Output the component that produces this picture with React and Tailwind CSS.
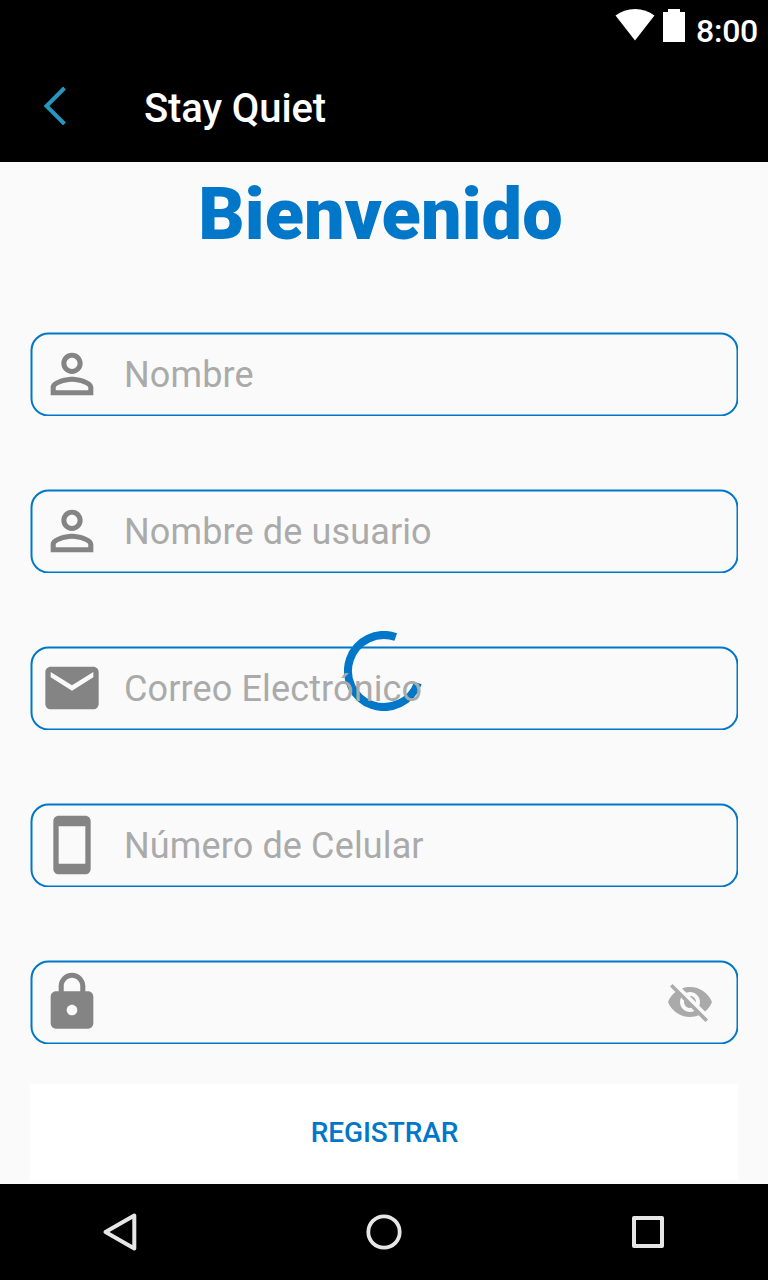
const ICONS = {
  person: "M12 5.9c1.16 0 2.1.94 2.1 2.1s-.94 2.1-2.1 2.1S9.9 9.16 9.9 8s.94-2.1 2.1-2.1m0 9c2.97 0 6.1 1.46 6.1 2.1v1.1H5.9V17c0-.64 3.13-2.1 6.1-2.1M12 4C9.79 4 8 5.79 8 8s1.79 4 4 4 4-1.79 4-4-1.79-4-4-4zm0 9c-2.67 0-8 1.34-8 4v3h16v-3c0-2.66-5.33-4-8-4z",
  mail: "M20 4H4c-1.1 0-1.99.9-1.99 2L2 18c0 1.1.9 2 2 2h16c1.1 0 2-.9 2-2V6c0-1.1-.9-2-2-2zm0 4l-8 5-8-5V6l8 5 8-5v2z",
  phone: "M17 1.01L7 1c-1.1 0-2 .9-2 2v18c0 1.1.9 2 2 2h10c1.1 0 2-.9 2-2V3c0-1.1-.9-1.99-2-1.99zM17 19H7V5h10v14z",
  lock: "M18 8h-1V6c0-2.76-2.24-5-5-5S7 3.24 7 6v2H6c-1.1 0-2 .9-2 2v10c0 1.1.9 2 2 2h12c1.1 0 2-.9 2-2V10c0-1.1-.9-2-2-2zm-6 9c-1.1 0-2-.9-2-2s.9-2 2-2 2 .9 2 2-.9 2-2 2zm3.1-9H8.9V6c0-1.71 1.39-3.1 3.1-3.1 1.71 0 3.1 1.39 3.1 3.1v2z",
  hidden: "M12 7c2.76 0 5 2.24 5 5 0 .65-.13 1.26-.36 1.83l2.92 2.92c1.51-1.26 2.7-2.89 3.43-4.75-1.73-4.39-6-7.5-11-7.5-1.4 0-2.74.25-3.98.7l2.16 2.16C10.74 7.13 11.35 7 12 7zM2 4.27l2.28 2.28.46.46C3.08 8.3 1.78 10.02 1 12c1.73 4.39 6 7.5 11 7.5 1.55 0 3.03-.3 4.38-.84l.42.42L19.73 22 21 20.73 3.27 3 2 4.27zM7.53 9.8l1.55 1.55c-.05.21-.08.43-.08.65 0 1.66 1.34 3 3 3 .22 0 .44-.03.65-.08l1.55 1.55c-.67.33-1.41.53-2.2.53-2.76 0-5-2.24-5-5 0-.79.2-1.53.53-2.2zm4.31-.78l3.15 3.15.02-.16c0-1.66-1.34-3-3-3l-.17.01z",
};

const FIELDS = [
  { icon: "person", label: "Nombre" },
  { icon: "person", label: "Nombre de usuario" },
  { icon: "mail", label: "Correo Electrónico" },
  { icon: "phone", label: "Número de Celular" },
  { icon: "lock", label: "", secret: true },
];

function Icon({ name, className }) {
  return (
    <svg viewBox="0 0 24 24" fill="currentColor" className={className}>
      <path d={ICONS[name]} />
    </svg>
  );
}

function Field({ icon, label, secret }) {
  return (
    <div className="relative flex h-[84px] items-center overflow-hidden pl-[10px] pr-6">
      <div className="absolute inset-0 translate-x-[0.5px] translate-y-[0.5px] rounded-[18px] border-2 border-[#0077c9]" />
      <Icon name={icon} className="size-16 shrink-0 text-[#848484]" />
      <span className="relative z-10 ml-5 mt-[2px] flex-1 text-[36px] leading-[42px] tracking-[0.13px] text-[#aaaaaa]">{label}</span>
      {secret && <Icon name="hidden" className="size-12 text-[#aaaaaa]" />}
    </div>
  );
}

export default function App() {
  return (
    <div className="relative flex h-[1280px] w-[768px] flex-col overflow-hidden bg-[#fafafa] font-['Roboto',sans-serif]">
      <header className="flex h-[162px] shrink-0 flex-col bg-black text-white">
        <div className="flex h-12 items-start justify-end pr-[10px]">
          <svg viewBox="0 0 40 32" className="mt-[9px] h-8 w-10" fill="#fff">
            <path d="M20 31.500L0.500 6.500C6 2.300 12.500 0 20 0s14 2.300 19.500 6.500z" />
          </svg>
          <svg viewBox="0 0 22 33" className="ml-2 mt-[9px] h-[33px] w-[22px]" fill="#fff">
            <path d="M0 3h5V0h12v3h5v30H0z" />
          </svg>
          <span className="ml-[11px] mt-3 text-[32px] font-medium leading-[38px] tracking-[-0.25px]">8:00</span>
        </div>
        <div className="flex h-[114px] items-center">
          <svg viewBox="0 0 24 40" className="ml-[43px] h-10 w-6" fill="none" stroke="#2596be" strokeWidth="4">
            <path d="M21.500 3L3.500 21L21.500 39" />
          </svg>
          <h1 className="ml-[77px] mt-[7px] text-[40px] font-medium leading-[48px] tracking-[-0.1px]">Stay Quiet</h1>
        </div>
      </header>

      <main className="flex flex-1 flex-col px-[30px]">
        <h2 className="mt-[11px] h-[84px] pr-[7px] text-center text-[72px] font-black leading-[84px] tracking-[0.1px] text-[#0077c9]">Bienvenido</h2>
        <div className="mt-[75px] flex flex-col gap-[73px]">
          {FIELDS.map((field, i) => (
            <Field key={i} {...field} />
          ))}
        </div>
        <button className="mt-10 h-24 w-full bg-white pl-px pt-[2px] text-[28px] font-medium tracking-[-0.1px] text-[#0077c9]">REGISTRAR</button>
      </main>

      <svg viewBox="0 0 80 80" className="absolute left-[344px] top-[631px] size-20" fill="none" stroke="#0077c9" strokeWidth="8">
        <path d="M51.720 5.960A36 36 0 1 0 73.940 52" />
      </svg>

      <nav className="flex h-24 shrink-0 items-center justify-between bg-black px-[100px]">
        <svg viewBox="0 0 40 40" className="size-10" fill="none" stroke="#e6e6e6" strokeWidth="4" strokeLinejoin="round">
          <path d="M34.300 3.500v33L5.500 20z" />
        </svg>
        <svg viewBox="0 0 40 40" className="size-10" fill="none" stroke="#e6e6e6" strokeWidth="3.800">
          <circle cx="20" cy="20" r="15.700" />
        </svg>
        <svg viewBox="0 0 40 40" className="size-10" fill="none" stroke="#e6e6e6" strokeWidth="4" strokeLinejoin="round">
          <rect x="6" y="6" width="28" height="28" />
        </svg>
      </nav>
    </div>
  );
}
